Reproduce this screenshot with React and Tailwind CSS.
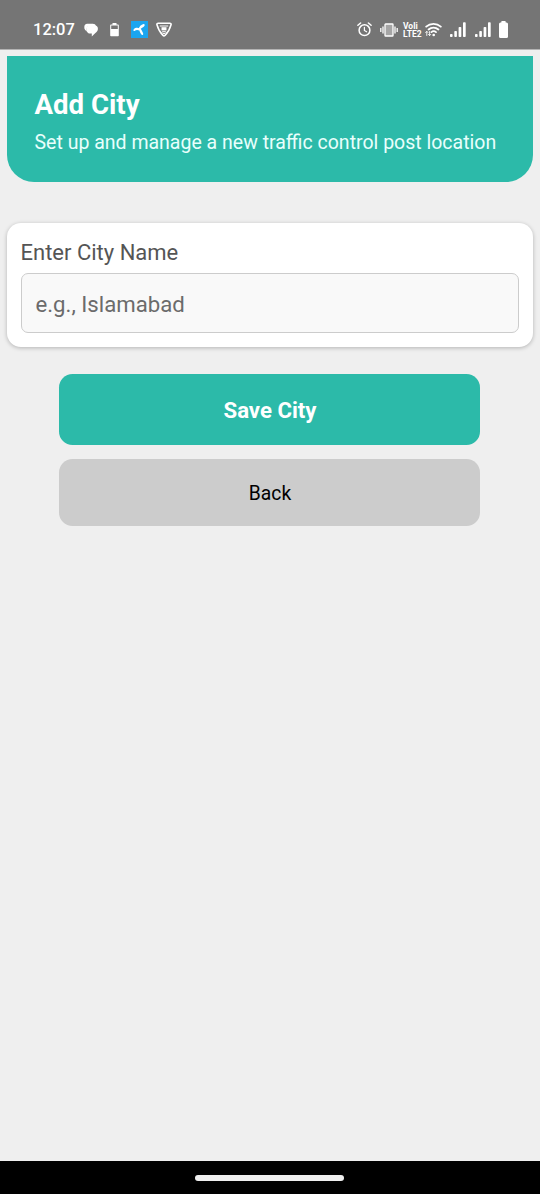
import React, { useState } from 'react';

const ChatIcon = () => (
  <svg className="ml-[9px] h-[14px] w-[14px]" viewBox="0 0 14 14" fill="#fff">
    <path d="M3.4.8h5.4c1.8 0 2.7.8 3.2 2L10.5 3H5.8A3.2 3.2 0 0 0 2.7 6.2V8.6L1.2 7A3.7 3.7 0 0 1 .3 4.3 3.4 3.4 0 0 1 3.4.8z" />
    <path d="M5.6 2.2h4.6a3.7 3.7 0 0 1 3.7 3.8c0 2-1.2 3-2.5 3.9L7.8 13.4V10.6H6.5A3.9 3.9 0 0 1 2.5 6.4 4 4 0 0 1 5.6 2.2z" />
  </svg>
);

const LowBatteryIcon = () => (
  <svg className="ml-3 h-[14px] w-[9px]" viewBox="0 0 9 14" fill="#fff">
    <path fillRule="evenodd" d="M2.5 0h4v1.5H8a.8.8 0 0 1 .8.8v10.2a.8.8 0 0 1-.8.8H1a.8.8 0 0 1-.8-.8V2.3A.8.8 0 0 1 1 1.5h1.5zM1.2 2.6V6h6.6V2.6z" />
  </svg>
);

const TelenorIcon = () => (
  <svg className="ml-3 h-[17px] w-[17px]" viewBox="0 0 17 17">
    <rect width="17" height="17" fill="#1ba5f0" />
    <g fill="#fff">
      <path d="M7.5 8.4C8 5.7 10.2 3.6 12.5 3.1c1.5-.2 1.5 1.5.5 2.4C11.7 6.7 10 7 8.8 9.2z" />
      <path d="M8.4 9.5C6.5 8.6 5 8.8 3.6 9.9c-1 .6-1.6-.8-.8-1.7C4.2 6.5 6.7 6.4 8.8 7.4z" />
      <path d="M7.8 7.6h1.8c1 1.8 2.3 3.7 2.6 5.1.2 1.4-1.3 1.6-2 .6C9.1 11.7 8.2 9.7 7.8 7.6z" />
    </g>
  </svg>
);

const ShieldIcon = () => (
  <svg className="ml-2 h-[15px] w-[16px]" viewBox="0 0 16 15" fill="none" stroke="#fff">
    <path d="M2.2 1.2h11.6c1 0 1.5.8 1.2 1.7-1.1 4.1-2.9 7.5-6 10.5-.7.6-1.4.6-2 0C3.9 10.4 2.1 7 1 2.9.7 2 1.2 1.2 2.2 1.2z" strokeWidth="1.6" />
    <path d="M3.8 4h8.4M6.2 9.7h3.6" strokeWidth="1" />
    <path d="M5.5 5.2h5v3.2h-5z" fill="#fff" stroke="none" />
    <path d="M6.8 10.6 8 12l1.2-1.4" strokeWidth="1" />
  </svg>
);

const AlarmIcon = () => (
  <svg className="h-[15px] w-[15px]" viewBox="0 0 15 15" fill="none" stroke="#fff" strokeLinecap="round">
    <circle cx="7.5" cy="8.2" r="5.4" strokeWidth="1.5" />
    <path d="M.9 3.3 3.6 1M14.1 3.3 11.4 1" strokeWidth="1.5" />
    <path d="M7.4 5.3v3.2l2.2 1.3" strokeWidth="1.2" />
  </svg>
);

const VibrateIcon = () => (
  <svg className="ml-2 h-[14px] w-[18px]" viewBox="0 0 18 14" fill="none" stroke="#fff">
    <rect x="5" y="1" width="8" height="12" rx=".6" fill="#a5a5a5" strokeWidth="1.3" />
    <path d="M3 3.5v7M15 3.5v7M.8 5v4M17.2 5v4" strokeWidth="1.3" />
  </svg>
);

const WifiIcon = () => (
  <svg className="ml-[3px] h-[15px] w-[17px]" viewBox="0 0 17 15" fill="none" stroke="#fff" strokeLinecap="round">
    <path d="M1.2 4.7a10.7 10.7 0 0 1 14.6 0M3.6 7.5a7.1 7.1 0 0 1 9.8 0M6.4 10.1a3.6 3.6 0 0 1 4.6 0" strokeWidth="1.8" />
    <circle cx="8.7" cy="13" r="1.3" fill="#fff" stroke="none" />
    <path d="M1.8 9.5v4M.7 10.5l1.1-1.1 1.1 1.1M4.6 9.5v4M3.5 12.4l1.1 1.1 1.1-1.1" strokeWidth=".9" />
  </svg>
);

const SignalIcon = ({ className }) => (
  <svg className={`h-[15px] w-[16px] ${className}`} viewBox="0 0 16 15" fill="#fff">
    <rect x="0" y="12" width="2.6" height="3" rx=".8" />
    <rect x="4.3" y="9" width="2.6" height="6" rx=".8" />
    <rect x="8.6" y="5" width="2.7" height="10" rx=".8" />
    <rect x="13" y="0.3" width="2.7" height="14.7" rx=".8" />
  </svg>
);

const BatteryIcon = () => (
  <svg className="ml-2 h-[17px] w-[9px]" viewBox="0 0 9 17" fill="#fff">
    <path d="M3 0h3a.7.7 0 0 1 .7.7v.8h.8A1.5 1.5 0 0 1 9 3v12.4A1.5 1.5 0 0 1 7.5 17h-6A1.5 1.5 0 0 1 0 15.5V3a1.5 1.5 0 0 1 1.5-1.5h.8V.7A.7.7 0 0 1 3 0z" />
  </svg>
);

const StatusBar = () => (
  <div className="flex h-[50px] items-center justify-between border-b border-[#b4b4b4] bg-[#757575] pt-[10px] pr-8 pl-[33px] text-white">
    <div className="flex items-center">
      <span className="w-[42px] text-[16.5px] leading-5 font-medium whitespace-nowrap">12:07</span>
      <ChatIcon />
      <LowBatteryIcon />
      <TelenorIcon />
      <ShieldIcon />
    </div>
    <div className="flex items-center">
      <AlarmIcon />
      <VibrateIcon />
      <div className="ml-[5px] flex w-[19px] flex-col text-[8.5px] leading-[8px] font-bold whitespace-nowrap">
        <span>Voli</span>
        <span>LTE2</span>
      </div>
      <WifiIcon />
      <SignalIcon className="ml-2" />
      <SignalIcon className="ml-[9px]" />
      <BatteryIcon />
    </div>
  </div>
);

const App = () => {
  const [city, setCity] = useState('');

  return (
    <div className="flex h-[1194px] w-[540px] flex-col overflow-hidden bg-[#efefef] font-['Roboto',sans-serif]">
      <StatusBar />

      <main className="flex flex-1 flex-col px-[7px] pt-[6px]">
        <header className="h-[126px] rounded-b-[27px] bg-[#2cbaa9] px-[27.5px] pt-[33px] text-white">
          <h1 className="text-[27.6px] leading-8 font-bold">Add City</h1>
          <p className="mt-[10px] text-[19.5px] leading-6 whitespace-nowrap text-[#e8fffc]">
            Set up and manage a new traffic control post location
          </p>
        </header>

        <section className="mt-[41px] h-[123.5px] rounded-[14px] bg-white pt-[17px] pr-[14px] pl-[13.5px] shadow-[0_1px_4px_rgba(0,0,0,0.25)]">
          <label htmlFor="city" className="block text-[22px] leading-[26px] text-[#555]">
            Enter City Name
          </label>
          <input
            id="city"
            value={city}
            onChange={(e) => setCity(e.target.value)}
            placeholder="e.g., Islamabad"
            className="mt-[7px] block h-[60px] w-full rounded-[7px] border border-[#ccc] bg-[#f9f9f9] px-3.5 pt-px text-[22.2px] text-[#333] outline-none placeholder:text-[#6b6b6b]"
          />
        </section>

        <div className="mt-[27.5px] flex flex-col items-center gap-[13.5px]">
          <button className="mr-px h-[71px] w-[421px] rounded-[13.5px] bg-[#2cbaa9] pt-[2px] pl-px text-[22.2px] font-bold text-white">
            Save City
          </button>
          <button className="mr-px h-[67.5px] w-[421px] rounded-[13.5px] bg-[#ccc] pt-[4px] pl-px text-[19.3px] text-black">
            Back
          </button>
        </div>
      </main>

      <footer className="flex h-[33px] items-center justify-center bg-black">
        <div className="mr-px h-[6px] w-[149px] rounded-full bg-[#efefef]" />
      </footer>
    </div>
  );
};

export default App;
